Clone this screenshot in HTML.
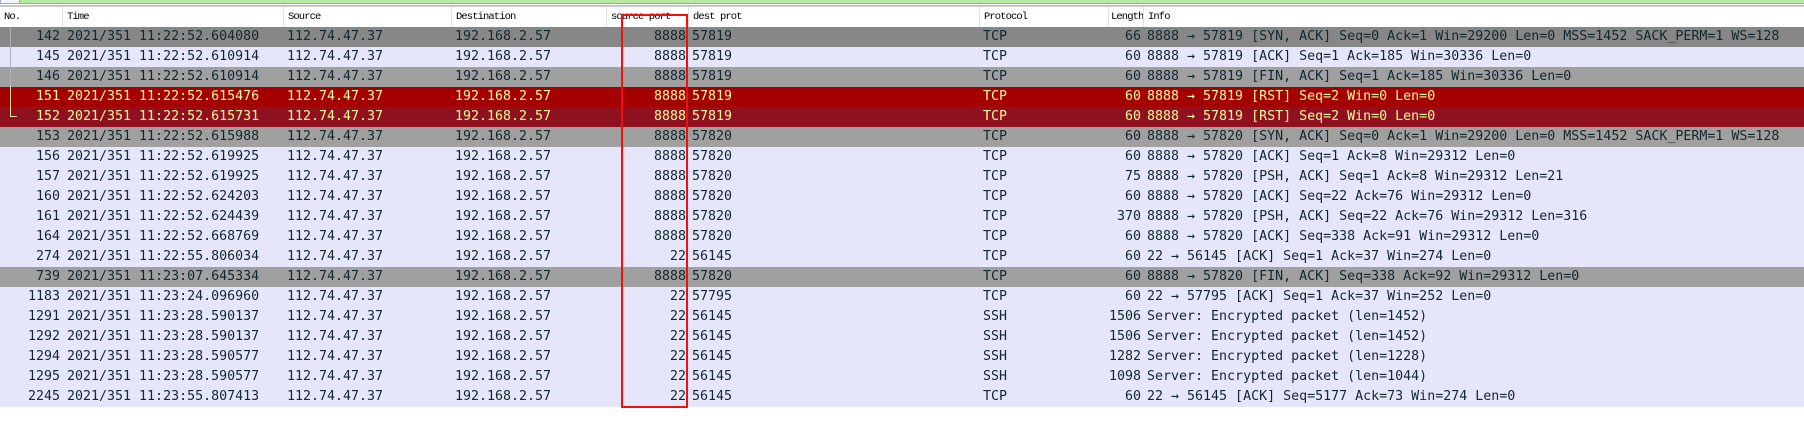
<!DOCTYPE html>
<html><head><meta charset="utf-8"><style>
body{margin:0;width:1804px;height:421px;background:#fff;position:relative;overflow:hidden;font-family:"DejaVu Sans Mono","Liberation Mono",monospace;}
.top{position:absolute;left:20px;top:0;width:1784px;height:3px;background:#b6eaa0;border-bottom:1px solid #8cb878}
.tl{position:absolute;left:0;top:0;width:20px;height:4px;border:1px solid #a0a8c0;border-top:none;box-sizing:border-box;background:#f4f6fb}
.hl{position:absolute;left:0;top:5px;width:1804px;height:2px;background:#c8c8c8}
.hdr{position:absolute;top:7px;height:20px;font-family:"Liberation Mono","Noto Serif CJK SC",monospace;font-size:10.5px;letter-spacing:-0.9px;line-height:20px;color:#000;border-left:1px solid #e2e2e2;padding-left:4px;box-sizing:border-box;white-space:nowrap;overflow:hidden}
.row{position:absolute;left:0;width:1804px;height:20px;font-size:13.3px;line-height:20px;color:#12272e;white-space:pre}
.row span{position:absolute;top:0}
.r{text-align:right}
.g1{background:#878787}.g2{background:#a0a0a0}.l{background:#e6e6fa}
.rd1{background:#a40000;color:#fffc9c}.rd2{background:#8f101e;color:#fffc9c}
.box{position:absolute;left:621px;top:14px;width:67px;height:394px;border:2px solid #f01010;box-sizing:border-box}
</style></head><body>
<div class="top"></div><div class="tl"></div><div class="hl"></div>
<div class="hdr" style="left:0;width:62px;border-left:none">No.</div>
<div class="hdr" style="left:62px;width:221px">Time</div>
<div class="hdr" style="left:283px;width:168px">Source</div>
<div class="hdr" style="left:451px;width:155px">Destination</div>
<div class="hdr" style="left:606px;width:82px">source port</div>
<div class="hdr" style="left:688px;width:291px">dest prot</div>
<div class="hdr" style="left:979px;width:129px">Protocol</div>
<div class="hdr" style="left:1108px;width:35px;padding-left:2px">Length</div>
<div class="hdr" style="left:1143px;width:661px">Info</div>
<div class="row g1" style="top:27px"><span class="r" style="left:0;width:60px">142</span><span style="left:67px">2021/351 11:22:52.604080</span><span style="left:287px">112.74.47.37</span><span style="left:455px">192.168.2.57</span><span class="r" style="left:606px;width:80px">8888</span><span style="left:692px">57819</span><span style="left:983px">TCP</span><span class="r" style="left:1108px;width:33px">66</span><span style="left:1147px">8888 → 57819 [SYN, ACK] Seq=0 Ack=1 Win=29200 Len=0 MSS=1452 SACK_PERM=1 WS=128</span></div>
<div class="row l" style="top:47px"><span class="r" style="left:0;width:60px">145</span><span style="left:67px">2021/351 11:22:52.610914</span><span style="left:287px">112.74.47.37</span><span style="left:455px">192.168.2.57</span><span class="r" style="left:606px;width:80px">8888</span><span style="left:692px">57819</span><span style="left:983px">TCP</span><span class="r" style="left:1108px;width:33px">60</span><span style="left:1147px">8888 → 57819 [ACK] Seq=1 Ack=185 Win=30336 Len=0</span></div>
<div class="row g2" style="top:67px"><span class="r" style="left:0;width:60px">146</span><span style="left:67px">2021/351 11:22:52.610914</span><span style="left:287px">112.74.47.37</span><span style="left:455px">192.168.2.57</span><span class="r" style="left:606px;width:80px">8888</span><span style="left:692px">57819</span><span style="left:983px">TCP</span><span class="r" style="left:1108px;width:33px">60</span><span style="left:1147px">8888 → 57819 [FIN, ACK] Seq=1 Ack=185 Win=30336 Len=0</span></div>
<div class="row rd1" style="top:87px"><span class="r" style="left:0;width:60px">151</span><span style="left:67px">2021/351 11:22:52.615476</span><span style="left:287px">112.74.47.37</span><span style="left:455px">192.168.2.57</span><span class="r" style="left:606px;width:80px">8888</span><span style="left:692px">57819</span><span style="left:983px">TCP</span><span class="r" style="left:1108px;width:33px">60</span><span style="left:1147px">8888 → 57819 [RST] Seq=2 Win=0 Len=0</span></div>
<div class="row rd2" style="top:107px"><span class="r" style="left:0;width:60px">152</span><span style="left:67px">2021/351 11:22:52.615731</span><span style="left:287px">112.74.47.37</span><span style="left:455px">192.168.2.57</span><span class="r" style="left:606px;width:80px">8888</span><span style="left:692px">57819</span><span style="left:983px">TCP</span><span class="r" style="left:1108px;width:33px">60</span><span style="left:1147px">8888 → 57819 [RST] Seq=2 Win=0 Len=0</span></div>
<div class="row g2" style="top:127px"><span class="r" style="left:0;width:60px">153</span><span style="left:67px">2021/351 11:22:52.615988</span><span style="left:287px">112.74.47.37</span><span style="left:455px">192.168.2.57</span><span class="r" style="left:606px;width:80px">8888</span><span style="left:692px">57820</span><span style="left:983px">TCP</span><span class="r" style="left:1108px;width:33px">60</span><span style="left:1147px">8888 → 57820 [SYN, ACK] Seq=0 Ack=1 Win=29200 Len=0 MSS=1452 SACK_PERM=1 WS=128</span></div>
<div class="row l" style="top:147px"><span class="r" style="left:0;width:60px">156</span><span style="left:67px">2021/351 11:22:52.619925</span><span style="left:287px">112.74.47.37</span><span style="left:455px">192.168.2.57</span><span class="r" style="left:606px;width:80px">8888</span><span style="left:692px">57820</span><span style="left:983px">TCP</span><span class="r" style="left:1108px;width:33px">60</span><span style="left:1147px">8888 → 57820 [ACK] Seq=1 Ack=8 Win=29312 Len=0</span></div>
<div class="row l" style="top:167px"><span class="r" style="left:0;width:60px">157</span><span style="left:67px">2021/351 11:22:52.619925</span><span style="left:287px">112.74.47.37</span><span style="left:455px">192.168.2.57</span><span class="r" style="left:606px;width:80px">8888</span><span style="left:692px">57820</span><span style="left:983px">TCP</span><span class="r" style="left:1108px;width:33px">75</span><span style="left:1147px">8888 → 57820 [PSH, ACK] Seq=1 Ack=8 Win=29312 Len=21</span></div>
<div class="row l" style="top:187px"><span class="r" style="left:0;width:60px">160</span><span style="left:67px">2021/351 11:22:52.624203</span><span style="left:287px">112.74.47.37</span><span style="left:455px">192.168.2.57</span><span class="r" style="left:606px;width:80px">8888</span><span style="left:692px">57820</span><span style="left:983px">TCP</span><span class="r" style="left:1108px;width:33px">60</span><span style="left:1147px">8888 → 57820 [ACK] Seq=22 Ack=76 Win=29312 Len=0</span></div>
<div class="row l" style="top:207px"><span class="r" style="left:0;width:60px">161</span><span style="left:67px">2021/351 11:22:52.624439</span><span style="left:287px">112.74.47.37</span><span style="left:455px">192.168.2.57</span><span class="r" style="left:606px;width:80px">8888</span><span style="left:692px">57820</span><span style="left:983px">TCP</span><span class="r" style="left:1108px;width:33px">370</span><span style="left:1147px">8888 → 57820 [PSH, ACK] Seq=22 Ack=76 Win=29312 Len=316</span></div>
<div class="row l" style="top:227px"><span class="r" style="left:0;width:60px">164</span><span style="left:67px">2021/351 11:22:52.668769</span><span style="left:287px">112.74.47.37</span><span style="left:455px">192.168.2.57</span><span class="r" style="left:606px;width:80px">8888</span><span style="left:692px">57820</span><span style="left:983px">TCP</span><span class="r" style="left:1108px;width:33px">60</span><span style="left:1147px">8888 → 57820 [ACK] Seq=338 Ack=91 Win=29312 Len=0</span></div>
<div class="row l" style="top:247px"><span class="r" style="left:0;width:60px">274</span><span style="left:67px">2021/351 11:22:55.806034</span><span style="left:287px">112.74.47.37</span><span style="left:455px">192.168.2.57</span><span class="r" style="left:606px;width:80px">22</span><span style="left:692px">56145</span><span style="left:983px">TCP</span><span class="r" style="left:1108px;width:33px">60</span><span style="left:1147px">22 → 56145 [ACK] Seq=1 Ack=37 Win=274 Len=0</span></div>
<div class="row g2" style="top:267px"><span class="r" style="left:0;width:60px">739</span><span style="left:67px">2021/351 11:23:07.645334</span><span style="left:287px">112.74.47.37</span><span style="left:455px">192.168.2.57</span><span class="r" style="left:606px;width:80px">8888</span><span style="left:692px">57820</span><span style="left:983px">TCP</span><span class="r" style="left:1108px;width:33px">60</span><span style="left:1147px">8888 → 57820 [FIN, ACK] Seq=338 Ack=92 Win=29312 Len=0</span></div>
<div class="row l" style="top:287px"><span class="r" style="left:0;width:60px">1183</span><span style="left:67px">2021/351 11:23:24.096960</span><span style="left:287px">112.74.47.37</span><span style="left:455px">192.168.2.57</span><span class="r" style="left:606px;width:80px">22</span><span style="left:692px">57795</span><span style="left:983px">TCP</span><span class="r" style="left:1108px;width:33px">60</span><span style="left:1147px">22 → 57795 [ACK] Seq=1 Ack=37 Win=252 Len=0</span></div>
<div class="row l" style="top:307px"><span class="r" style="left:0;width:60px">1291</span><span style="left:67px">2021/351 11:23:28.590137</span><span style="left:287px">112.74.47.37</span><span style="left:455px">192.168.2.57</span><span class="r" style="left:606px;width:80px">22</span><span style="left:692px">56145</span><span style="left:983px">SSH</span><span class="r" style="left:1100px;width:41px">1506</span><span style="left:1147px">Server: Encrypted packet (len=1452)</span></div>
<div class="row l" style="top:327px"><span class="r" style="left:0;width:60px">1292</span><span style="left:67px">2021/351 11:23:28.590137</span><span style="left:287px">112.74.47.37</span><span style="left:455px">192.168.2.57</span><span class="r" style="left:606px;width:80px">22</span><span style="left:692px">56145</span><span style="left:983px">SSH</span><span class="r" style="left:1100px;width:41px">1506</span><span style="left:1147px">Server: Encrypted packet (len=1452)</span></div>
<div class="row l" style="top:347px"><span class="r" style="left:0;width:60px">1294</span><span style="left:67px">2021/351 11:23:28.590577</span><span style="left:287px">112.74.47.37</span><span style="left:455px">192.168.2.57</span><span class="r" style="left:606px;width:80px">22</span><span style="left:692px">56145</span><span style="left:983px">SSH</span><span class="r" style="left:1100px;width:41px">1282</span><span style="left:1147px">Server: Encrypted packet (len=1228)</span></div>
<div class="row l" style="top:367px"><span class="r" style="left:0;width:60px">1295</span><span style="left:67px">2021/351 11:23:28.590577</span><span style="left:287px">112.74.47.37</span><span style="left:455px">192.168.2.57</span><span class="r" style="left:606px;width:80px">22</span><span style="left:692px">56145</span><span style="left:983px">SSH</span><span class="r" style="left:1100px;width:41px">1098</span><span style="left:1147px">Server: Encrypted packet (len=1044)</span></div>
<div class="row l" style="top:387px"><span class="r" style="left:0;width:60px">2245</span><span style="left:67px">2021/351 11:23:55.807413</span><span style="left:287px">112.74.47.37</span><span style="left:455px">192.168.2.57</span><span class="r" style="left:606px;width:80px">22</span><span style="left:692px">56145</span><span style="left:983px">TCP</span><span class="r" style="left:1108px;width:33px">60</span><span style="left:1147px">22 → 56145 [ACK] Seq=5177 Ack=73 Win=274 Len=0</span></div>
<div style="position:absolute;left:10px;top:27px;width:1px;height:89px;background:#b0b0c0"></div>
<div style="position:absolute;left:10px;top:116px;width:7px;height:1px;background:#f0e0a0"></div>
<div style="position:absolute;left:10px;top:87px;width:1px;height:29px;background:#f0e0a0"></div>
<div class="box"></div>
</body></html>
